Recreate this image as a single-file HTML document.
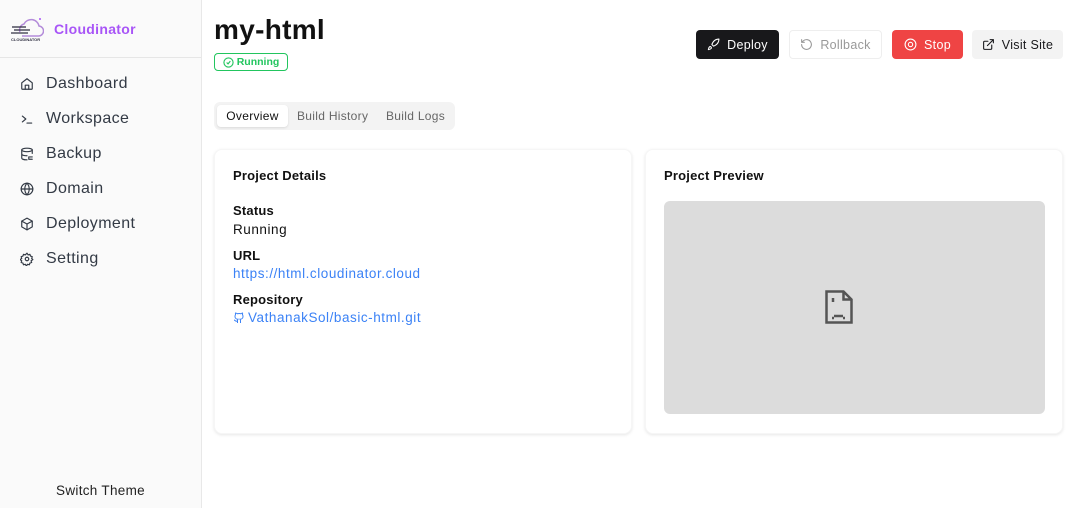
<!DOCTYPE html>
<html><head><meta charset="utf-8"><style>
*{box-sizing:border-box;margin:0;padding:0}
body{width:1074px;height:508px;overflow:hidden;background:#fff;font-family:"Liberation Sans",sans-serif;color:#111;position:relative}
.side{position:absolute;left:0;top:0;width:202px;height:508px;background:#fafafa;border-right:1px solid #e8e8e8}
.logo{height:58px;border-bottom:1px solid #e6e6e6;display:flex;align-items:center;padding-left:10px}
.logo span{color:#a855f7;font-weight:bold;font-size:14px;margin-left:10px;letter-spacing:0.3px}
.nav{position:absolute;left:20px;font-size:16px;color:#333a45;display:flex;align-items:center;letter-spacing:0.4px;line-height:20px}
.nav svg{width:14px;height:14px;margin-right:12px;stroke:#333a45;fill:none;stroke-width:2;stroke-linecap:round;stroke-linejoin:round}
.abs{position:absolute}
.btn{position:absolute;top:30px;height:29px;border-radius:4px;font-size:12.5px;display:flex;align-items:center;justify-content:center;gap:7px;letter-spacing:0.3px}
.btn svg{width:13px;height:13px;fill:none;stroke-width:2;stroke-linecap:round;stroke-linejoin:round}
.card{position:absolute;top:149px;height:285px;background:#fff;border-radius:8px;box-shadow:0 1px 3px rgba(0,0,0,.1);border:1px solid #f6f6f6}
.lbl{position:absolute;left:18px;font-size:13px;font-weight:bold;letter-spacing:0.2px}
.val{position:absolute;left:18px;font-size:13.5px;letter-spacing:0.55px}
</style></head><body>
<div class="side">
 <div class="logo">
  <svg width="34" height="26" viewBox="0 0 34 26"><path d="M10 16a6 6 0 0 1 4-8 8 8 0 0 1 15 2 5 5 0 0 1-1 10H12" fill="none" stroke="#b38bd9" stroke-width="1.5"/><g stroke="#334" stroke-width="1.3"><line x1="2" y1="11" x2="16" y2="11"/><line x1="4" y1="14" x2="20" y2="14"/><line x1="1" y1="17" x2="18" y2="17"/></g><text x="1" y="25" font-size="4" font-family="Liberation Sans" font-weight="bold" fill="#334">CLOUDINATOR</text><circle cx="30" cy="3" r="1" fill="#a855f7"/></svg>
  <span>Cloudinator</span>
 </div>
 <div class="nav" style="top:74px"><svg viewBox="0 0 24 24"><path d="M3 10l9-7 9 7v10a1 1 0 0 1-1 1H4a1 1 0 0 1-1-1z"/><path d="M9 21v-7h6v7"/></svg>Dashboard</div>
 <div class="nav" style="top:109px"><svg viewBox="0 0 24 24"><path d="M4 17l6-5-6-5M12 19h8"/></svg>Workspace</div>
 <div class="nav" style="top:144px"><svg viewBox="0 0 24 24"><ellipse cx="12" cy="5" rx="9" ry="3"/><path d="M3 5v14c0 1.7 4 3 9 3M21 5v6M3 12c0 1.7 4 3 9 3"/><path d="M15 17h6M15 17v4h6"/></svg>Backup</div>
 <div class="nav" style="top:179px"><svg viewBox="0 0 24 24"><circle cx="12" cy="12" r="10"/><path d="M2 12h20M12 2a15 15 0 0 1 0 20M12 2a15 15 0 0 0 0 20"/></svg>Domain</div>
 <div class="nav" style="top:214px"><svg viewBox="0 0 24 24"><path d="M12 2l9 5v10l-9 5-9-5V7z"/><path d="M3 7l9 5 9-5M12 12v10"/></svg>Deployment</div>
 <div class="nav" style="top:249px"><svg viewBox="0 0 24 24"><circle cx="12" cy="12" r="3"/><path d="M12 2l2 3 3-1 1 3 3 1-1 3 2 2-3 2 1 3-3 1-1 3-3-1-2 3-2-3-3 1-1-3-3-1 1-3-3-2 3-2-1-3 3-1 1-3 3 1z"/></svg>Setting</div>
 <div class="abs" style="left:0;width:201px;top:483px;text-align:center;font-size:13.5px;color:#222;letter-spacing:0.3px">Switch Theme</div>
</div>

<div class="abs" style="left:214px;top:14px;font-size:28px;font-weight:bold;letter-spacing:0.3px">my-html</div>
<div class="abs" style="left:214px;top:53px;width:74px;height:18px;border:1px solid #22c55e;border-radius:4px;color:#22c55e;font-size:10.5px;font-weight:bold;display:flex;align-items:center;justify-content:center;gap:3px"><svg width="11" height="11" viewBox="0 0 24 24" fill="none" stroke="#22c55e" stroke-width="2.5"><circle cx="12" cy="12" r="10"/><path d="M8 12l3 3 5-6"/></svg>Running</div>

<div class="btn" style="left:696px;width:83px;background:#18181b;color:#fff"><svg viewBox="0 0 24 24" stroke="#fff"><path d="M4.5 16.5c-1.5 1.3-2 5-2 5s3.7-.5 5-2c.7-.8.7-2.1-.1-2.9a2.2 2.2 0 0 0-2.9-.1zM12 15l-3-3a22 22 0 0 1 2-4A13 13 0 0 1 22 2c0 2.7-.8 7.5-6 11a22 22 0 0 1-4 2z"/></svg>Deploy</div>
<div class="btn" style="left:789px;width:93px;border:1px solid #eee;color:#999"><svg viewBox="0 0 24 24" stroke="#999"><path d="M3 12a9 9 0 1 0 3-6.7L3 8M3 3v5h5"/></svg>Rollback</div>
<div class="btn" style="left:892px;width:71px;background:#ef4444;color:#fff"><svg viewBox="0 0 24 24" stroke="#fff"><circle cx="12" cy="12" r="10"/><circle cx="12" cy="12" r="4"/></svg>Stop</div>
<div class="btn" style="left:972px;width:91px;background:#f3f3f3;color:#18181b"><svg viewBox="0 0 24 24" stroke="#18181b"><path d="M15 3h6v6M10 14L21 3M18 13v6a2 2 0 0 1-2 2H5a2 2 0 0 1-2-2V8a2 2 0 0 1 2-2h6"/></svg>Visit Site</div>

<div class="abs" style="left:214px;top:102px;width:241px;height:28px;background:#f3f3f3;border-radius:6px"></div>
<div class="abs" style="left:217px;top:105px;width:71px;height:22px;background:#fff;border-radius:4px;box-shadow:0 1px 2px rgba(0,0,0,.1);font-size:12px;display:flex;align-items:center;justify-content:center;letter-spacing:0.3px">Overview</div>
<div class="abs" style="left:297px;top:109px;font-size:12px;color:#666;letter-spacing:0.3px">Build History</div>
<div class="abs" style="left:386px;top:109px;font-size:12px;color:#666;letter-spacing:0.3px">Build Logs</div>

<div class="card" style="left:214px;width:418px">
 <div class="lbl" style="top:18px">Project Details</div>
 <div class="lbl" style="top:53px">Status</div>
 <div class="val" style="top:72px">Running</div>
 <div class="lbl" style="top:98px">URL</div>
 <div class="val" style="top:116px;color:#3b82f6">https://html.cloudinator.cloud</div>
 <div class="lbl" style="top:142px">Repository</div>
 <div class="val" style="top:160px;color:#3b82f6;display:flex;align-items:center;gap:3px"><svg width="12" height="12" viewBox="0 0 24 24" fill="none" stroke="#3b82f6" stroke-width="2"><path d="M15 22v-4a4.8 4.8 0 0 0-1-3.5c3 0 6-2 6-5.5.1-1.3-.3-2.5-1-3.5.3-1.2.3-2.4 0-3.5 0 0-1 0-3 1.5a14 14 0 0 0-7 0C6 2 5 2 5 2c-.3 1.1-.3 2.3 0 3.5A5.4 5.4 0 0 0 4 9c0 3.5 3 5.5 6 5.5-.4.5-.7 1-.9 1.6-.2.6-.2 1.2-.1 1.9v4M9 18c-4.5 2-5-2-7-2"/></svg>VathanakSol/basic-html.git</div>
</div>

<div class="card" style="left:645px;width:418px">
 <div class="lbl" style="top:18px">Project Preview</div>
 <div class="abs" style="left:18px;top:51px;width:381px;height:213px;background:#dcdcdc;border-radius:6px">
  <svg class="abs" style="left:161px;top:89px" width="28" height="34" viewBox="0 0 28 34" fill="none" stroke="#555" stroke-width="2.5"><path d="M1.5 1.5h17l8 8v23h-25z"/><path d="M18.5 1.5v8h8"/><path d="M8 8v4M9 26h9M7 28h2M18 28h2"/></svg>
 </div>
</div>
</body></html>
